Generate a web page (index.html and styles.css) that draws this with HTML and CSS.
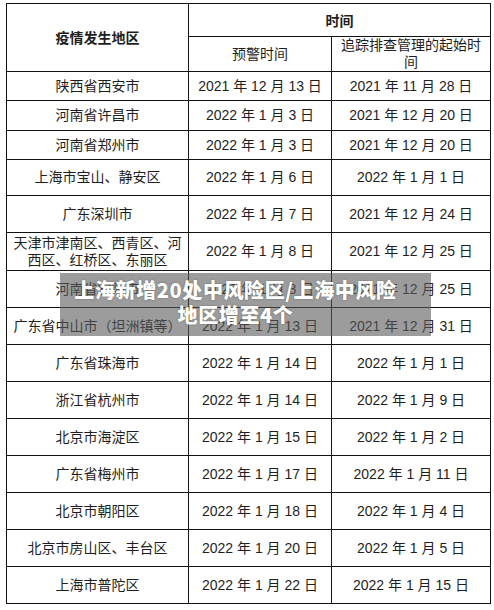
FILE: index.html
```html
<!DOCTYPE html>
<html>
<head>
<meta charset="utf-8">
<link rel="stylesheet" href="styles.css">
</head>
<body>
<div class="page">
<table class="tbl">
  <colgroup><col class="c1"><col class="c2"><col class="c3"></colgroup>
  <tr class="h1"><th rowspan="2" class="hd">疫情发生地区</th><th colspan="2" class="hd">时间</th></tr>
  <tr class="h2"><td>预警时间</td><td class="wrap">追踪排查管理的起始时<br>间</td></tr>
  <tr class="r29"><td>陕西省西安市</td><td>2021 年 12 月 13 日</td><td>2021 年 11 月 28 日</td></tr>
  <tr class="r30"><td>河南省许昌市</td><td>2022 年 1 月 3 日</td><td>2021 年 12 月 20 日</td></tr>
  <tr class="r29"><td>河南省郑州市</td><td>2022 年 1 月 3 日</td><td>2021 年 12 月 20 日</td></tr>
  <tr class="r36"><td>上海市宝山、静安区</td><td>2022 年 1 月 6 日</td><td>2022 年 1 月 1 日</td></tr>
  <tr class="r37"><td>广东深圳市</td><td>2022 年 1 月 7 日</td><td>2021 年 12 月 24 日</td></tr>
  <tr class="r38"><td class="two">天津市津南区、西青区、河<br>西区、红桥区、东丽区</td><td>2022 年 1 月 8 日</td><td>2021 年 12 月 25 日</td></tr>
  <tr class="r37"><td>河南省安阳市</td><td>2022 年 1 月 8 日</td><td>2021 年 12 月 25 日</td></tr>
  <tr class="r37"><td>广东省中山市（坦洲镇等）</td><td>2022 年 1 月 13 日</td><td>2021 年 12 月 31 日</td></tr>
  <tr class="r37"><td>广东省珠海市</td><td>2022 年 1 月 14 日</td><td>2022 年 1 月 1 日</td></tr>
  <tr class="r37"><td>浙江省杭州市</td><td>2022 年 1 月 14 日</td><td>2022 年 1 月 9 日</td></tr>
  <tr class="r37"><td>北京市海淀区</td><td>2022 年 1 月 15 日</td><td>2022 年 1 月 2 日</td></tr>
  <tr class="r37"><td>广东省梅州市</td><td>2022 年 1 月 17 日</td><td>2022 年 1 月 11 日</td></tr>
  <tr class="r37"><td>北京市朝阳区</td><td>2022 年 1 月 18 日</td><td>2022 年 1 月 4 日</td></tr>
  <tr class="r37"><td>北京市房山区、丰台区</td><td>2022 年 1 月 20 日</td><td>2022 年 1 月 5 日</td></tr>
  <tr class="r37"><td>上海市普陀区</td><td>2022 年 1 月 22 日</td><td>2022 年 1 月 15 日</td></tr>
</table>
<div class="caption">上海新增20处中风险区/上海中风险<br>地区增至4个</div>
</div>
</body>
</html>
```
FILE: styles.css
```css
html, body {
  margin: 0;
  padding: 0;
  background: #ffffff;
}
.page {
  position: relative;
  width: 494px;
  height: 610px;
  padding-top: 3px;
  padding-left: 6px;
  box-sizing: border-box;
}
.tbl {
  border-collapse: collapse;
  table-layout: fixed;
  width: 484px;
  font-family: "Liberation Sans", "Noto Sans CJK SC", sans-serif;
  font-size: 14px;
  color: #1e1e1e;
}
.c1 { width: 182px; }
.c2 { width: 143px; }
.c3 { width: 159px; }
.tbl th, .tbl td {
  border: 1px solid #111;
  padding: 0;
  text-align: center;
  vertical-align: middle;
  line-height: 17px;
  font-weight: normal;
  overflow: hidden;
  white-space: nowrap;
}
.tbl th.hd {
  font-weight: bold;
  font-family: "Noto Sans CJK SC", sans-serif;
}
.h1 { height: 33px; }
.h2 { height: 33px; }
.wrap { line-height: 16px; }
.r29 { height: 29px; }
.r30 { height: 30px; }
.r36 { height: 36px; }
.r37 { height: 37px; }
.r38 { height: 38px; }
.two { line-height: 19px; }
.caption {
  position: absolute;
  left: 60px;
  top: 273px;
  width: 371px;
  height: 63px;
  padding-right: 20px;
  box-sizing: border-box;
  background: rgba(90, 90, 90, 0.6);
  color: #ffffff;
  font-family: "Noto Sans CJK SC", sans-serif;
  font-weight: 900;
  font-size: 20px;
  letter-spacing: 0.6px;
  line-height: 25px;
  text-align: center;
  padding-top: 4px;
  text-shadow: 0 0 2px rgba(0, 0, 0, 0.35);
}
```
